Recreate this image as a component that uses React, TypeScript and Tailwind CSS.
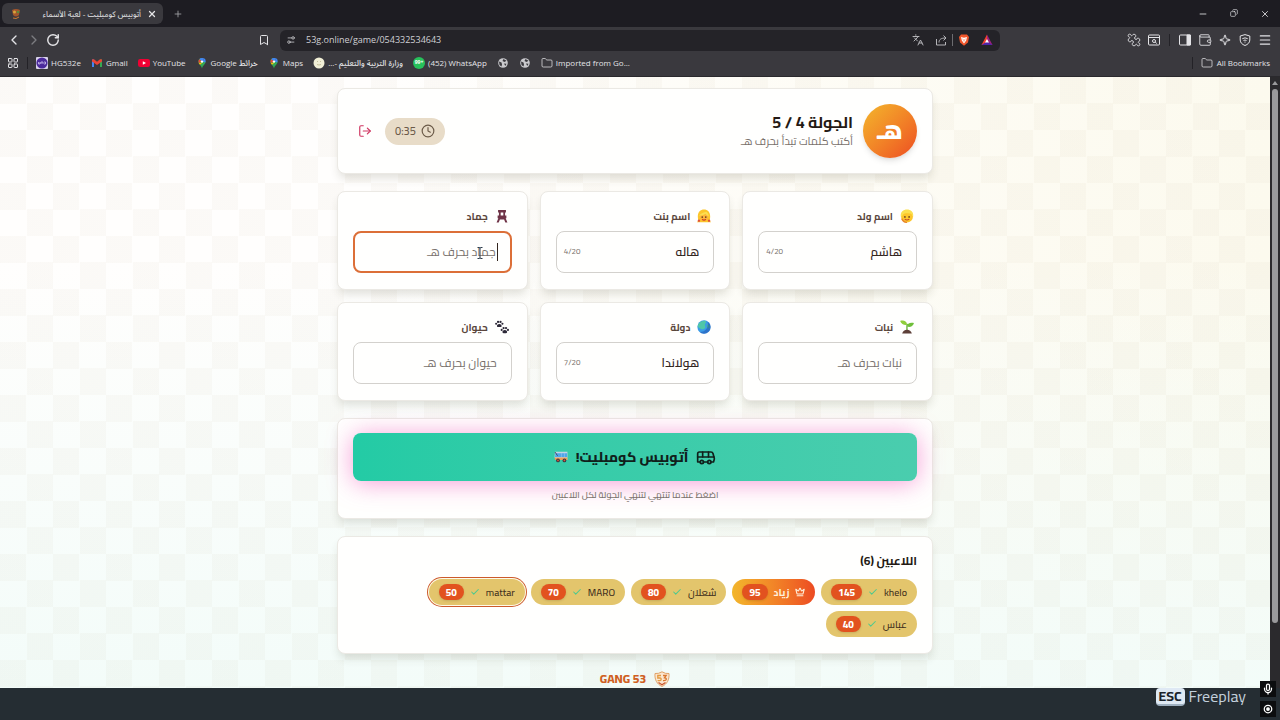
import { clsx } from "clsx"
import {
  Bookmark,
  Bus,
  Check,
  ChevronLeft,
  ChevronRight,
  Clock,
  Copy,
  Crown,
  Folder,
  Languages,
  LayoutGrid,
  LogOut,
  Menu,
  Mic,
  Minus,
  Plus,
  Puzzle,
  RotateCw,
  Settings2,
  Sparkle,
  Wallet,
  X
} from "lucide-react"

const cardClass =
  "rounded-lg border border-[#ebe9e4] bg-[#fffffe] shadow-[0_6px_10px_-2px_rgba(60,60,40,0.16)]"

function BoyIcon() {
  return (
    <svg viewBox="0 0 16 16" className="h-3.5 w-3.5">
      <circle cx="8" cy="8.500" r="6.800" fill="#fcc62b" />
      <path d="M1 9C0 3 4 .5 8 .5S16 3 15 9c-.8-2.500-2-3.800-4-4C7.500 5 4.500 4.600 3 7z" fill="#fbe04e" />
      <path d="M2 11q2 4.300 6 4.300" stroke="#e8862c" strokeWidth="1.500" fill="none" />
      <circle cx="5.600" cy="9" r="1" fill="#6b4420" />
      <circle cx="10.400" cy="9" r="1" fill="#6b4420" />
      <path d="M5.400 11.600q2.600 2 5.200 0" stroke="#c4482a" strokeWidth="1.200" fill="none" />
    </svg>
  )
}

function GirlIcon() {
  return (
    <svg viewBox="0 0 16 16" className="h-3.5 w-3.5">
      <path d="M1.500 13C-.5 5 3 .5 8 .5S16.500 5 14.500 13l1.500 2H0z" fill="#fcc62b" />
      <circle cx="8" cy="9" r="5" fill="#ffb53a" />
      <path d="M2.500 8c1.500-4 6-4 8-5C13 4.500 13.500 7 13.300 8.500 11.500 7.500 10.300 6.500 9.800 5.500 8 7 5 7.500 2.500 8z" fill="#fbe04e" />
      <circle cx="6" cy="9.200" r="1" fill="#6b4420" />
      <circle cx="10" cy="9.200" r="1" fill="#6b4420" />
      <path d="M5.800 11.800q2.200 1.700 4.400 0" stroke="#d0451f" strokeWidth="1.300" fill="none" />
      <circle cx="2.200" cy="13.300" r="1.400" fill="#e0533a" />
      <circle cx="13.800" cy="13.300" r="1.400" fill="#e0533a" />
    </svg>
  )
}

function ChairIcon() {
  return (
    <svg viewBox="0 0 16 16" className="h-3.5 w-3.5">
      <path
        d="M3.500 1h9v3h-1v3.500H13v3h-.8l2 5h-2.400L10.400 12H5.600l-1.400 3.500H1.800l2-5H3v-3h1.500V4h-1z M6.500 4v3.500h3V4z"
        fill="#6e3347"
        fillRule="evenodd"
      />
    </svg>
  )
}

function PlantIcon() {
  return (
    <svg viewBox="0 0 16 16" className="h-3.5 w-3.5">
      <path d="M8 12C8 8 7.500 6 8.500 4.500" stroke="#5fae2e" strokeWidth="1.500" fill="none" />
      <path d="M8 5.500C5 6.500 1.500 4.500 .2 1c3-1 7.800 0 7.800 4.500z" fill="#8fce3c" />
      <path d="M8 7.500c0-3.500 3.500-5 8-4C14.800 7.500 11 9 8 7.500z" fill="#6fbf3a" />
      <path d="M2.500 15.500C3 12.500 5.500 11 8 11s5 1.500 5.500 4.500z" fill="#5d3f38" />
    </svg>
  )
}

function EarthIcon() {
  return (
    <svg viewBox="0 0 16 16" className="h-3.5 w-3.5">
      <circle cx="8" cy="8" r="7.600" fill="#3b9be6" />
      <path d="M2.500 3.500C5 1 8 .5 10 1c1 1.500-.5 2.500-1 4s1 2 .5 3.500S7 11 5.500 10.500 2 9 .8 7.500c.1-1.500.7-3 1.700-4z" fill="#4fc6a8" />
      <path d="M11.500 5.500c1-.8 2-.5 3 .5l.5 2.500-2 1.500c-1.500-1-2.500-3-1.500-4.500z" fill="#46b890" />
      <path d="M12 1.600A7.600 7.600 0 0 1 8 15.600c-2 0-3.500-.8-4.800-2C9 14 14 9 12 1.600z" fill="#2458b8" opacity=".6" />
    </svg>
  )
}

function PawsIcon() {
  return (
    <svg viewBox="0 0 16 16" className="h-3.5 w-3.5" fill="#2d2938">
      <path d="M4.900 4.500c1.600 0 3.100 1.500 2.600 2.900-.5 1-1.600.6-2.600.6s-2.100.4-2.600-.6c-.5-1.400 1-2.900 2.600-2.900z" />
      <circle cx="1.300" cy="4.300" r="1.200" />
      <circle cx="3.500" cy="2.200" r="1.300" />
      <circle cx="6.300" cy="2.200" r="1.300" />
      <circle cx="8.500" cy="4.300" r="1.200" />
      <path d="M11.200 11.500c1.600 0 3.100 1.500 2.600 2.900-.5 1-1.600.6-2.600.6s-2.100.4-2.600-.6c-.5-1.400 1-2.900 2.600-2.900z" />
      <circle cx="7.600" cy="11.300" r="1.200" />
      <circle cx="9.800" cy="9.200" r="1.300" />
      <circle cx="12.600" cy="9.200" r="1.300" />
      <circle cx="14.800" cy="11.300" r="1.200" />
    </svg>
  )
}

function BusEmoji() {
  return (
    <svg viewBox="0 0 16 14" className="h-3 w-3.5">
      <path d="M1 1h14.500v9.500H1.500L.5 7z" fill="#c3d2e6" />
      <path d="M1.500 2.500h13.500V7H1z" fill="#4fa6ea" />
      <path d="M8.500 2.500V7M12 2.500V7" stroke="#9fcdf2" strokeWidth=".6" />
      <path d="M1 1.200l3 4.300" stroke="#3a3a52" />
      <path d="M.5 7.500h15v3H1z" fill="#e9a05a" />
      <circle cx="4.500" cy="11" r="2.200" fill="#3b3640" />
      <circle cx="12" cy="11" r="2.200" fill="#3b3640" />
      <circle cx="4.500" cy="11" r="1" fill="#e25a3a" />
      <circle cx="12" cy="11" r="1" fill="#e25a3a" />
    </svg>
  )
}

function GangLogo() {
  return (
    <svg viewBox="0 0 16 16" className="h-4 w-4" fill="none">
      <path d="M1 2.500Q4.500 3 8 .8 11.500 3 15 2.500C15.500 9 13 13 8 15.500 3 13 .5 9 1 2.500z" fill="#fbe6cf" stroke="#e0a268" />
      <path d="M7 4.500H3.800V7H6q1.300 0 1.200 1.300T5.800 9.600H3.600" stroke="#e39a3f" strokeWidth="1.300" />
      <path d="M9 4.500h3.200L10.500 6.800q2 .2 1.800 1.600T9 9.600" stroke="#d9772f" strokeWidth="1.300" />
      <path d="M4.500 11.500L8 13.800l3.500-2.300" stroke="#c8542d" strokeWidth="1.200" />
    </svg>
  )
}

function MapPin() {
  return (
    <svg viewBox="0 0 12 12" className="h-3 w-3">
      <path d="M6 1a3.600 3.600 0 0 0-3.600 3.600C2.400 7.500 5 8.200 6 11.500 7 8.200 9.600 7.500 9.600 4.600z" fill="#34a853" />
      <path d="M6 1a3.600 3.600 0 0 0-2.800 1.300L6 4.600l2.500-3A3.600 3.600 0 0 0 6 1z" fill="#4285f4" />
      <path d="M3.200 2.300a3.600 3.600 0 0 0-.5 3.600L6 4.600z" fill="#ea4335" />
      <path d="M2.700 5.900L4 7.700 6.800 5.500z" fill="#fbbc04" />
      <path d="M8.500 1.600c1.200 1 1.400 2.500.8 4L6 4.600z" fill="#4285f4" />
      <circle cx="6" cy="4.600" r="1.200" fill="#fff" />
    </svg>
  )
}

function GlobeIcon() {
  return (
    <svg viewBox="0 0 12 12" className="h-3 w-3">
      <circle cx="6" cy="6" r="4.800" fill="#c9c9cd" />
      <path d="M2 4.500l2.500 1L5 7.500 4.500 9.500 2.500 8z M6.500 2L5.500 4l2 1 2-1.200z M7 6.500l2.500.3L8.300 9z" fill="#3a393e" />
    </svg>
  )
}

const bookmarks = [
  {
    title: "HG532e",
    icon: (
      <svg viewBox="0 0 12 12" className="h-3 w-3">
        <rect width="12" height="12" rx="1" fill="#d9d3ea" />
        <circle cx="6" cy="6" r="5.600" fill="#4b2a9c" />
        <path d="M2.500 5v2h1.500V5M5 7V5h2v2M8 5h1.500v2H8" stroke="#cfc3f2" strokeWidth=".8" fill="none" />
      </svg>
    )
  },
  {
    title: "Gmail",
    icon: (
      <svg viewBox="0 0 12 12" className="h-3 w-3">
        <path d="M1 2.500h2V10H1z" fill="#4285f4" />
        <path d="M9 2.500h2V10H9z" fill="#34a853" />
        <path d="M1 2.500L3 2.200l3 2.600 3-2.600 2 .3v2L6 8 1 4.500z" fill="#ea4335" />
      </svg>
    )
  },
  {
    title: "YouTube",
    icon: (
      <svg viewBox="0 0 12 12" className="h-3 w-3">
        <rect x="0" y="2" width="12" height="8" rx="2.200" fill="#f00033" />
        <path d="M4.800 4.200L8 6 4.800 7.800z" fill="#fff" />
      </svg>
    )
  },
  { title: "خرائط Google", icon: <MapPin /> },
  { title: "Maps", icon: <MapPin /> },
  {
    title: "وزارة التربية والتعليم -...",
    icon: (
      <svg viewBox="0 0 12 12" className="h-3 w-3">
        <circle cx="6" cy="6" r="5.500" fill="#f1efd6" />
        <path d="M4 4.500h1M7 4.500h1M4 7.500q2 1 4 0" stroke="#b9b48a" strokeWidth=".8" fill="none" />
      </svg>
    )
  },
  {
    title: "(452) WhatsApp",
    icon: (
      <span className="flex h-3 w-3 items-center justify-center rounded-full bg-[#27c15b] text-[5px] font-bold text-white">
        99+
      </span>
    )
  },
  { title: "", icon: <GlobeIcon /> },
  { title: "", icon: <GlobeIcon /> },
  { title: "Imported from Go...", icon: <Folder className="h-3 w-3" strokeWidth={1.5} /> }
]

const fields = [
  { id: "boy", title: "اسم ولد", value: "هاشم", count: "4/20", icon: <BoyIcon /> },
  { id: "girl", title: "اسم بنت", value: "هاله", count: "4/20", icon: <GirlIcon /> },
  { id: "thing", title: "جماد", value: "", active: true, icon: <ChairIcon /> },
  { id: "plant", title: "نبات", value: "", icon: <PlantIcon /> },
  { id: "country", title: "دولة", value: "هولاندا", count: "7/20", icon: <EarthIcon /> },
  { id: "animal", title: "حيوان", value: "", icon: <PawsIcon /> }
]

const players = [
  { name: "khelo", score: 145 },
  { name: "زياد", score: 95, leader: true },
  { name: "شعلان", score: 80 },
  { name: "MARO", score: 70 },
  { name: "mattar", score: 50, me: true },
  { name: "عباس", score: 40 }
]

function BrowserBar() {
  return (
    <header className="shrink-0 bg-[#3a393e] font-['Open_Sans','Noto_Sans_Arabic','DejaVu_Sans',sans-serif] text-[#e4e4e7]">
      <div className="flex h-[27px] items-center justify-between bg-[#1d1c22] pl-0.5">
        <div className="flex items-center gap-2.5">
          <div className="flex h-[21px] w-[161px] items-center justify-between rounded-md bg-[#3a393e] pr-1.5 pl-2">
            <svg viewBox="0 0 12 12" className="h-3 w-3">
              <path d="M2 2q4-2 8 0l-1 5q-3 3-6 0z" fill="#a3562c" />
              <circle cx="4.500" cy="4" r="1.500" fill="#d8a43a" />
              <circle cx="8" cy="4" r="1.300" fill="#5f8b3c" />
              <path d="M3 10q3 1.500 6-1" stroke="#d07a30" fill="none" />
            </svg>
            <div className="flex items-center gap-1.5">
              <span dir="rtl" className="text-[8px] whitespace-nowrap">أتوبيس كومبليت - لعبة الأسماء</span>
              <button aria-label="Close tab"><X className="h-2.5 w-2.5" strokeWidth={3} /></button>
            </div>
          </div>
          <button aria-label="New tab"><Plus className="h-2.5 w-2.5 text-[#a5a5aa]" /></button>
        </div>
        <div className="flex">
          <button aria-label="Minimize" className="flex w-[31px] justify-center"><Minus className="h-2.5 w-2.5" /></button>
          <button aria-label="Restore" className="flex w-[31px] justify-center"><Copy className="h-2 w-2 -scale-x-100" /></button>
          <button aria-label="Close" className="flex w-[31px] justify-center"><X className="h-2.5 w-2.5" /></button>
        </div>
      </div>
      <div className="flex h-[26px] items-center">
        <div className="flex w-[280px] items-center justify-between pr-2.5 pl-1.5">
          <div className="flex items-center gap-1">
            <button aria-label="Back"><ChevronLeft className="h-4 w-4" /></button>
            <button aria-label="Forward"><ChevronRight className="h-4 w-4 text-[#7c7c81]" /></button>
            <button aria-label="Reload"><RotateCw className="h-3.5 w-3.5" strokeWidth={2.5} /></button>
          </div>
          <button aria-label="Bookmark"><Bookmark className="h-3 w-3" /></button>
        </div>
        <div className="flex h-[21px] flex-1 items-center gap-2.5 rounded-md bg-[#242328] pr-[7px] pl-1.5">
          <Settings2 className="h-2.5 w-2.5 -scale-y-100 text-[#c4c4c8]" />
          <input
            aria-label="Address"
            defaultValue="53g.online/game/054332534643"
            className="min-w-0 flex-1 bg-transparent text-[9px] text-[#d0d0d4] outline-none"
          />
          <div className="flex items-center gap-[11px]">
            <Languages className="h-3 w-3 text-[#b4b4b8]" />
            <svg viewBox="0 0 12 12" className="h-3 w-3 text-[#b4b4b8]" fill="none" stroke="currentColor">
              <path d="M1.500 5v6h9V8M4 8.500c0-3 2-4.500 6.500-4.500M8.500 1.500L11 4 8.500 6.500" />
            </svg>
            <div className="-ml-1.5 flex items-center gap-[5px]">
              <span className="h-3 w-px bg-[#6c6c70]" />
              <svg viewBox="0 0 12 12" className="h-3 w-3">
                <path d="M3 .5h6L11 3l-1 5.500L6 11.800 2 8.500 1 3z" fill="#f1562b" />
                <path d="M3 3l3 .8L9 3l-.8 3.500L6 9.500 3.800 6.500z" fill="#fff" />
                <path d="M4.500 5l1 .6M7.500 5l-1 .6M6 6v1.500" stroke="#f1562b" strokeWidth=".7" />
              </svg>
            </div>
            <svg viewBox="0 0 12 12" className="h-3 w-3">
              <path d="M6 .5L.5 11H6z" fill="#f0402f" />
              <path d="M6 .5L11.500 11H6z" fill="#9b1f7e" />
              <path d="M.5 11L6 7.500l5.500 3.500z" fill="#4c24a8" />
              <path d="M6 5L4 8.500h4z" fill="#fff" />
            </svg>
          </div>
        </div>
        <div className="flex w-[280px] items-center justify-end pr-[5px]">
          <button aria-label="Extensions" className="flex w-5 justify-center"><Puzzle className="h-3.5 w-3.5 -scale-x-100" strokeWidth={1.5} /></button>
          <button aria-label="Search tabs" className="flex w-5 justify-center">
            <svg viewBox="0 0 12 12" className="h-3 w-3" fill="none" stroke="currentColor">
              <rect x=".5" y="1" width="11" height="10" rx="1" />
              <path d="M.5 3.500h11M7.200 8.200L8.800 9.500" />
              <circle cx="6" cy="7" r="1.500" />
            </svg>
          </button>
          <span className="mx-[5px] h-3 w-px bg-[#232227]" />
          <button aria-label="Side panel" className="flex w-5 justify-center">
            <svg viewBox="0 0 12 12" className="h-3 w-3" fill="none" stroke="currentColor">
              <rect x=".5" y="1" width="11" height="10" rx="1" />
              <path d="M8 1h3.500v10H8z" fill="currentColor" />
            </svg>
          </button>
          <button aria-label="Wallet" className="flex w-5 justify-center"><Wallet className="h-3.5 w-3.5" strokeWidth={1.5} /></button>
          <button aria-label="Assistant" className="flex w-5 justify-center">
            <Sparkle className="h-3 w-3" />
          </button>
          <button aria-label="VPN" className="flex w-5 justify-center">
            <svg viewBox="0 0 12 12" className="h-3 w-3" fill="none" stroke="currentColor">
              <path d="M6 .6L10.800 2v4c0 2.600-2 4.500-4.800 5.500C3.200 10.500 1.200 8.600 1.200 6V2z" />
              <path d="M3.300 4.700q2.700-1.700 5.400 0M4.500 6.500q1.500-1 3 0M6 7.600v1" />
            </svg>
          </button>
          <button aria-label="Menu" className="flex w-5 justify-center"><Menu className="h-3.5 w-3.5" /></button>
        </div>
      </div>
      <nav className="flex h-6 items-center justify-between border-b border-[#2a292d] pr-2.5 pb-1 pl-[7px] text-[8px] font-medium">
        <div className="flex items-center gap-2">
          <LayoutGrid className="h-3 w-3" />
          <span className="h-3 w-px bg-[#232227]" />
          <div className="flex items-center gap-2.5">
            {bookmarks.map((item, index) => (
              <a key={index} href="#" aria-label={item.title || "Bookmark"} className="flex items-center gap-[3px] whitespace-nowrap">
                {item.icon}
                {item.title && <span dir="auto">{item.title}</span>}
              </a>
            ))}
          </div>
        </div>
        <div className="flex items-center gap-2">
          <span className="h-3 w-px bg-[#232227]" />
          <a href="#" className="flex items-center gap-1 whitespace-nowrap">
            <Folder className="h-3 w-3" strokeWidth={1.5} />
            All Bookmarks
          </a>
        </div>
      </nav>
    </header>
  )
}

function RoundHeader() {
  return (
    <section className={clsx(cardClass, "flex items-center justify-between p-[15px]")}>
      <div className="flex items-center gap-2.5">
        <div className="flex h-[54px] w-[54px] items-center justify-center rounded-full bg-linear-to-br from-[#f2b62c] to-[#ec4a22] text-2xl font-black text-white shadow-md">
          هـ
        </div>
        <div className="pb-0.5">
          <h1 className="text-base leading-[22px] font-bold text-[#241a14]">الجولة 4 / 5</h1>
          <p className="text-[11px] leading-4 text-[#79716b]">أكتب كلمات تبدأ بحرف هـ</p>
        </div>
      </div>
      <div className="flex items-center gap-2">
        <div className="flex h-[27px] items-center gap-[5px] rounded-full bg-[#e8dcc8] px-2.5 text-[#6b5a48]">
          <Clock className="h-3.5 w-3.5" />
          <span className="text-[11px] font-medium">0:35</span>
        </div>
        <button aria-label="خروج" className="flex h-6 w-6 items-center justify-center text-[#cf3560]">
          <LogOut className="h-3.5 w-3.5" />
        </button>
      </div>
    </section>
  )
}

function WordField({ field }: { field: (typeof fields)[number] }) {
  return (
    <div className={clsx(cardClass, "px-[15px] pt-[15px] pb-4")}>
      <label htmlFor={field.id} className="flex h-[18px] items-center gap-[7px] px-[3px] text-[10px] font-bold text-[#5a463c]">
        {field.icon}
        {field.title}
      </label>
      <div className="relative mt-1.5">
        <input
          id={field.id}
          defaultValue={field.value}
          placeholder={`${field.title} بحرف هـ`}
          className={clsx(
            "h-[42px] w-full rounded-lg px-3.5 pb-0.5 text-xs font-semibold text-[#33261f] outline-none placeholder:font-normal placeholder:text-[#78716c]",
            field.active ? "border-2 border-[#dc6f38]" : "border border-[#d3d1cd]"
          )}
        />
        {field.count && (
          <span className="absolute top-1/2 left-2 -translate-y-1/2 text-[8px] text-[#79716b]">{field.count}</span>
        )}
        {field.active && (
          <>
            <span className="absolute top-3 right-3.5 h-[18px] w-px bg-[#33261f]" />
            <svg viewBox="0 0 7 12" className="absolute top-4 right-7 h-3 w-2" fill="none" stroke="#2a3a4a">
              <path d="M1 .5h2l.5 1 .5-1h2M3.500 1.500v9M1 11.500h2l.5-1 .5 1h2" />
            </svg>
          </>
        )}
      </div>
    </div>
  )
}

function PlayerChip({ player }: { player: (typeof players)[number] }) {
  return (
    <li
      className={clsx(
        "flex h-[26px] items-center gap-1.5 rounded-full px-2.5 text-[10px]",
        player.leader
          ? "bg-linear-to-l from-[#ec4a22] to-[#f2b62c] font-bold text-[#fff1dc]"
          : "bg-[#e3c56c] font-medium text-[#3f2f1c]",
        player.me && "ring-1 ring-[#cc5a2c] ring-offset-1 ring-offset-[#fffbe8]"
      )}
    >
      {player.leader && <Crown className="h-2.5 w-2.5" strokeWidth={2.5} />}
      <span>{player.name}</span>
      {!player.leader && <Check className="h-2.5 w-2.5 text-[#4cc98f]" strokeWidth={2.5} />}
      <span className="flex h-4 items-center rounded-full bg-[#e2521f] px-[7px] font-extrabold text-white shadow-sm">
        {player.score}
      </span>
    </li>
  )
}

function GamePage() {
  return (
    <main
      dir="rtl"
      className="min-w-0 flex-1 overflow-hidden bg-[repeating-conic-gradient(transparent_0_25%,rgba(150,120,70,0.035)_0_50%),linear-gradient(to_top,#f3fcf9,rgba(245,252,249,0)_70%),linear-gradient(to_left,#fcfaee,#fffefd_70%)] bg-[length:53px_53px,100%_100%,100%_100%] px-4 pt-[11px] font-['Cairo','Roboto','Noto_Sans_Arabic','DejaVu_Sans',sans-serif]"
    >
      <div className="mx-auto flex w-full max-w-[596px] flex-col gap-[17px]">
        <RoundHeader />
        <div className="grid grid-cols-3 gap-3">
          {fields.map((field) => (
            <WordField key={field.id} field={field} />
          ))}
        </div>
        <section className={clsx(cardClass, "px-[15px] pt-3.5 pb-[15px] text-center")}>
          <button className="flex h-12 w-full items-center justify-center gap-2 rounded-lg bg-linear-to-r from-[#23cba5] to-[#4acdae] text-sm font-extrabold text-[#10201b] shadow-[0_2px_24px_rgba(240,90,190,0.6)]">
            <Bus className="h-5 w-5" />
            <span>أتوبيس كومبليت!</span>
            <BusEmoji />
          </button>
          <p className="mt-1.5 text-[9px] leading-4 font-medium text-[#79716b]">اضغط عندما تنتهي لتنهي الجولة لكل اللاعبين</p>
        </section>
        <section className={clsx(cardClass, "px-[15px] py-4")}>
          <h2 className="text-xs leading-4 font-bold text-[#241a14]">اللاعبين (6)</h2>
          <ul className="mt-2.5 flex flex-wrap gap-1.5">
            {players.map((player) => (
              <PlayerChip key={player.name} player={player} />
            ))}
          </ul>
        </section>
        <footer className="flex items-center justify-center gap-2 text-xs leading-4 font-extrabold text-[#cf5f22]">
          <GangLogo />
          <span dir="ltr">GANG 53</span>
        </footer>
      </div>
    </main>
  )
}

export default function App() {
  return (
    <div className="flex h-screen flex-col overflow-hidden">
      <BrowserBar />
      <div className="flex min-h-0 flex-1">
        <GamePage />
        <div className="flex w-2.5 shrink-0 flex-col items-center gap-1 bg-[#2b2a2d] pt-1">
          <svg viewBox="0 0 6 4" className="h-1 w-1.5" fill="#9a9a9c">
            <path d="M3 0l3 4H0z" />
          </svg>
          <div className="h-[534px] w-1.5 rounded-full bg-[#9a9a9c]" />
        </div>
      </div>
      <div className="relative flex h-8 shrink-0 items-start justify-end gap-1 bg-[#252d33] pr-[34px] font-['Cairo','Roboto',sans-serif]">
        <kbd className="rounded-sm border-b-2 border-[#9fb0c0] bg-[#dfe9f4] px-[3px] font-['Cairo','Roboto',sans-serif] text-sm leading-4 font-bold text-[#1b232b]">
          ESC
        </kbd>
        <span className="text-base leading-4 text-[#c3d0dc]">Freeplay</span>
        <div className="absolute right-1 bottom-[3px] flex flex-col gap-1">
          <span className="flex h-4 w-4 items-center justify-center bg-[#0c0d0f] text-white">
            <Mic className="h-3 w-3" strokeWidth={2.5} />
          </span>
          <span className="flex h-4 w-4 items-center justify-center bg-[#0c0d0f] text-white">
            <svg viewBox="0 0 12 12" className="h-2.5 w-2.5" fill="none" stroke="currentColor" strokeWidth="1.500">
              <circle cx="6" cy="6" r="4.500" />
              <circle cx="6" cy="6" r="1.500" fill="currentColor" />
            </svg>
          </span>
        </div>
      </div>
    </div>
  )
}
